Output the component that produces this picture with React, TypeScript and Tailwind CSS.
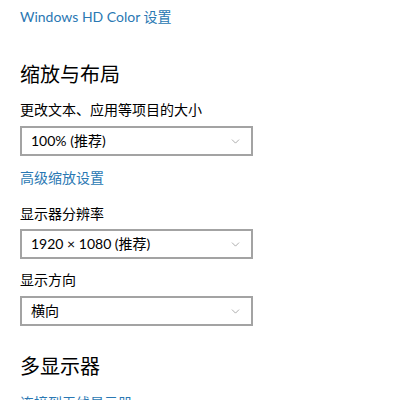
import { ChevronDown } from "lucide-react";

const font = { fontFamily: 'Lato, "Noto Sans CJK SC", sans-serif' };

function Select({ value, className }: { value: string; className?: string }) {
  return (
    <div
      className={`flex h-[30px] w-[233px] items-center justify-between border-2 border-[#a3a3a3] bg-white pl-[9px] pr-[9px] ${className ?? ""}`}
    >
      <span className="text-[14px] leading-[20px] text-black">{value}</span>
      <ChevronDown size={13} strokeWidth={1.1} className="text-[#777]" />
    </div>
  );
}

export default function App() {
  return (
    <div className="h-[400px] w-[407px] overflow-hidden bg-white pl-[20px]" style={font}>
      <div className="pt-[7px] text-[14px] leading-[20px] text-[#2a78b3]">Windows HD Color 设置</div>

      <h2 className="mt-[33px] text-[20px] leading-[28px] text-black">缩放与布局</h2>
      <div className="mt-[12px] text-[14px] leading-[20px] text-black">更改文本、应用等项目的大小</div>
      <Select value="100% (推荐)" className="mt-[6px]" />
      <div className="mt-[12px] text-[14px] leading-[20px] text-[#2a78b3]">高级缩放设置</div>

      <div className="mt-[16px] text-[14px] leading-[20px] text-black">显示器分辨率</div>
      <Select value="1920 × 1080 (推荐)" className="mt-[5px]" />

      <div className="mt-[11px] text-[14px] leading-[20px] text-black">显示方向</div>
      <Select value="横向" className="mt-[6px]" />

      <h2 className="mt-[26px] text-[20px] leading-[28px] text-black">多显示器</h2>
      <div className="mt-[13px] text-[14px] leading-[20px] text-[#2a78b3]">连接到无线显示器</div>
    </div>
  );
}
